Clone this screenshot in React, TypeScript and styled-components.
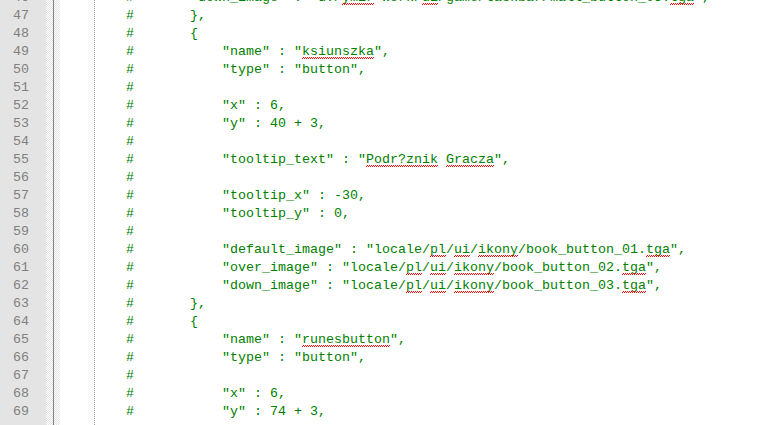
import React from "react";
import styled, { createGlobalStyle } from "styled-components";

const Global = createGlobalStyle`
  html, body {
    margin: 0;
    padding: 0;
    background: #ffffff;
    overflow: hidden;
  }
  #root { height: 425px; overflow: hidden; }
`;

const Editor = styled.div`
  display: flex;
  width: 774px;
  height: 425px;
  overflow: hidden;
  background: #ffffff;
  font-family: "Liberation Mono", "Courier New", monospace;
  font-size: 13.333px;
  line-height: 18px;
`;

const Scroller = styled.div`
  display: flex;
  margin-top: -11px;
  width: 100%;
  height: 436px;
  align-items: stretch;
`;

const LineNumbers = styled.div`
  width: 46px;
  flex: none;
  background: #e4e4e4;
  color: #808080;
  text-align: right;
  padding-right: 17px;
  box-sizing: border-box;
`;

const LineNo = styled.div`
  height: 18px;
  white-space: pre;
`;

const FoldMargin = styled.div`
  width: 14px;
  flex: none;
  background-color: #ffffff;
  background-image:
    linear-gradient(#808080, #808080),
    repeating-conic-gradient(#e4e4e4 0 25%, #ffffff 0 50%);
  background-size: 1px 100%, 2px 2px;
  background-position: 7px 0, 0 0;
  background-repeat: no-repeat, repeat;
`;

const Code = styled.div`
  flex: 1;
  padding-left: 2px;
  color: #008000;
  background-image: linear-gradient(#9a9a9a 0 1px, transparent 1px 2px);
  background-size: 1px 2px;
  background-position: 34px 1px;
  background-repeat: repeat-y;
`;

const CodeLine = styled.div`
  height: 18px;
  white-space: pre;
`;

const Misspelled = styled.span`
  position: relative;
  &::after {
    content: "";
    position: absolute;
    left: 0;
    right: 0;
    bottom: 0;
    height: 2px;
    background: repeating-conic-gradient(#ff0000 0 25%, transparent 0 50%) 0 0 / 2px 2px;
  }
`;

const P8 = "        ";
const H = P8 + "#";

const lines: string[] = [
  H + '       "down_image" : "d:/~ymir~ work/~ui~/game/taskbar/mall_button_03.~tga~",',
  H + "       },",
  H + "       {",
  H + '           "name" : "~ksiunszka~",',
  H + '           "type" : "button",',
  H,
  H + '           "x" : 6,',
  H + '           "y" : 40 + 3,',
  H,
  H + '           "tooltip_text" : "~Podr?znik~ ~Gracza~",',
  H,
  H + '           "tooltip_x" : -30,',
  H + '           "tooltip_y" : 0,',
  H,
  H + '           "default_image" : "locale/~pl~/~ui~/~ikony~/book_button_01.~tga~",',
  H + '           "over_image" : "locale/~pl~/~ui~/~ikony~/book_button_02.~tga~",',
  H + '           "down_image" : "locale/~pl~/~ui~/~ikony~/book_button_03.~tga~",',
  H + "       },",
  H + "       {",
  H + '           "name" : "~runesbutton~",',
  H + '           "type" : "button",',
  H,
  H + '           "x" : 6,',
  H + '           "y" : 74 + 3,',
];

const FIRST = 46;

function renderLine(text: string) {
  const parts = text.split("~");
  return parts.map((p, i) =>
    i % 2 === 1 ? <Misspelled key={i}>{p}</Misspelled> : <React.Fragment key={i}>{p}</React.Fragment>
  );
}

export default function App() {
  return (
    <>
      <Global />
      <Editor>
        <Scroller>
          <LineNumbers>
            {lines.map((_, i) => (
              <LineNo key={i}>{FIRST + i}</LineNo>
            ))}
          </LineNumbers>
          <FoldMargin />
          <Code>
            {lines.map((l, i) => (
              <CodeLine key={i}>{renderLine(l)}</CodeLine>
            ))}
          </Code>
        </Scroller>
      </Editor>
    </>
  );
}
